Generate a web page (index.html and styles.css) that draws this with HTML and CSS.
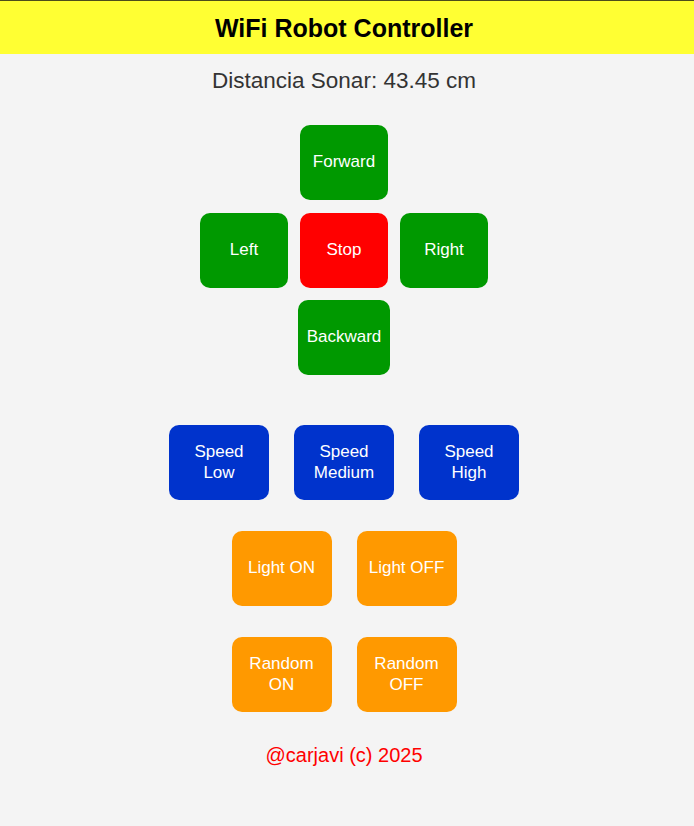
FILE: index.html
```html
<!DOCTYPE html>
<html>
<head>
<meta charset="utf-8">
<link rel="stylesheet" href="styles.css">
</head>
<body>
<header class="topbar"><h1 class="title">WiFi Robot Controller</h1></header>
<main class="content">
<p class="distance">Distancia Sonar: 43.45 cm</p>
<div class="dpad">
  <div class="row"><button class="btn dir">Forward</button></div>
  <div class="row">
    <button class="btn dir">Left</button>
    <button class="btn stop">Stop</button>
    <button class="btn dir">Right</button>
  </div>
  <div class="row"><button class="btn dir">Backward</button></div>
</div>
<div class="group">
  <div class="row wide">
    <button class="btn big speed">Speed<br>Low</button>
    <button class="btn big speed">Speed<br>Medium</button>
    <button class="btn big speed">Speed<br>High</button>
  </div>
  <div class="row wide">
    <button class="btn big orange">Light ON</button>
    <button class="btn big orange">Light OFF</button>
  </div>
  <div class="row wide">
    <button class="btn big orange">Random<br>ON</button>
    <button class="btn big orange">Random<br>OFF</button>
  </div>
</div>
<p class="footer">@carjavi (c) 2025</p>
</main>
</body>
</html>
```
FILE: styles.css
```css
html, body { margin: 0; padding: 0; }
body {
  background: #f4f4f4;
  font-family: "Liberation Sans", Arial, sans-serif;
  text-align: center;
}
.topbar {
  background: #ffff33;
  border-top: 1px solid #4d4d1a;
  height: 53px;
  box-sizing: border-box;
  height: 54px;
  padding: 2px 6px 0 0;
  display: flex;
  align-items: center;
  justify-content: center;
}
.title {
  margin: 0;
  font-size: 25px;
  font-weight: bold;
  color: #000;
}
.content { padding-right: 6px; }
.distance {
  margin: 14px 0 0;
  font-size: 22.5px;
  line-height: 26px;
  color: #333;
}
.dpad {
  margin-top: 31px;
  display: flex;
  flex-direction: column;
  gap: 12.5px;
}
.row {
  display: flex;
  justify-content: center;
  gap: 12px;
}
.btn {
  font-family: "Liberation Sans", Arial, sans-serif;
  font-size: 17px;
  line-height: 21px;
  color: #fff;
  border: none;
  border-radius: 10px;
  min-width: 88px;
  height: 75px;
  padding: 0 9px 2px;
  margin: 0;
}
.dir { background: #009900; }
.stop { background: #ff0000; }
.group {
  margin-top: 50px;
  display: flex;
  flex-direction: column;
  gap: 31px;
}
.row.wide { gap: 25px; }
.big { width: 100px; padding: 0 0 2px; }
.speed { background: #0033cc; }
.orange { background: #ff9900; }
.footer {
  margin: 32px 0 0;
  font-size: 20px;
  color: #ff0000;
}
```
